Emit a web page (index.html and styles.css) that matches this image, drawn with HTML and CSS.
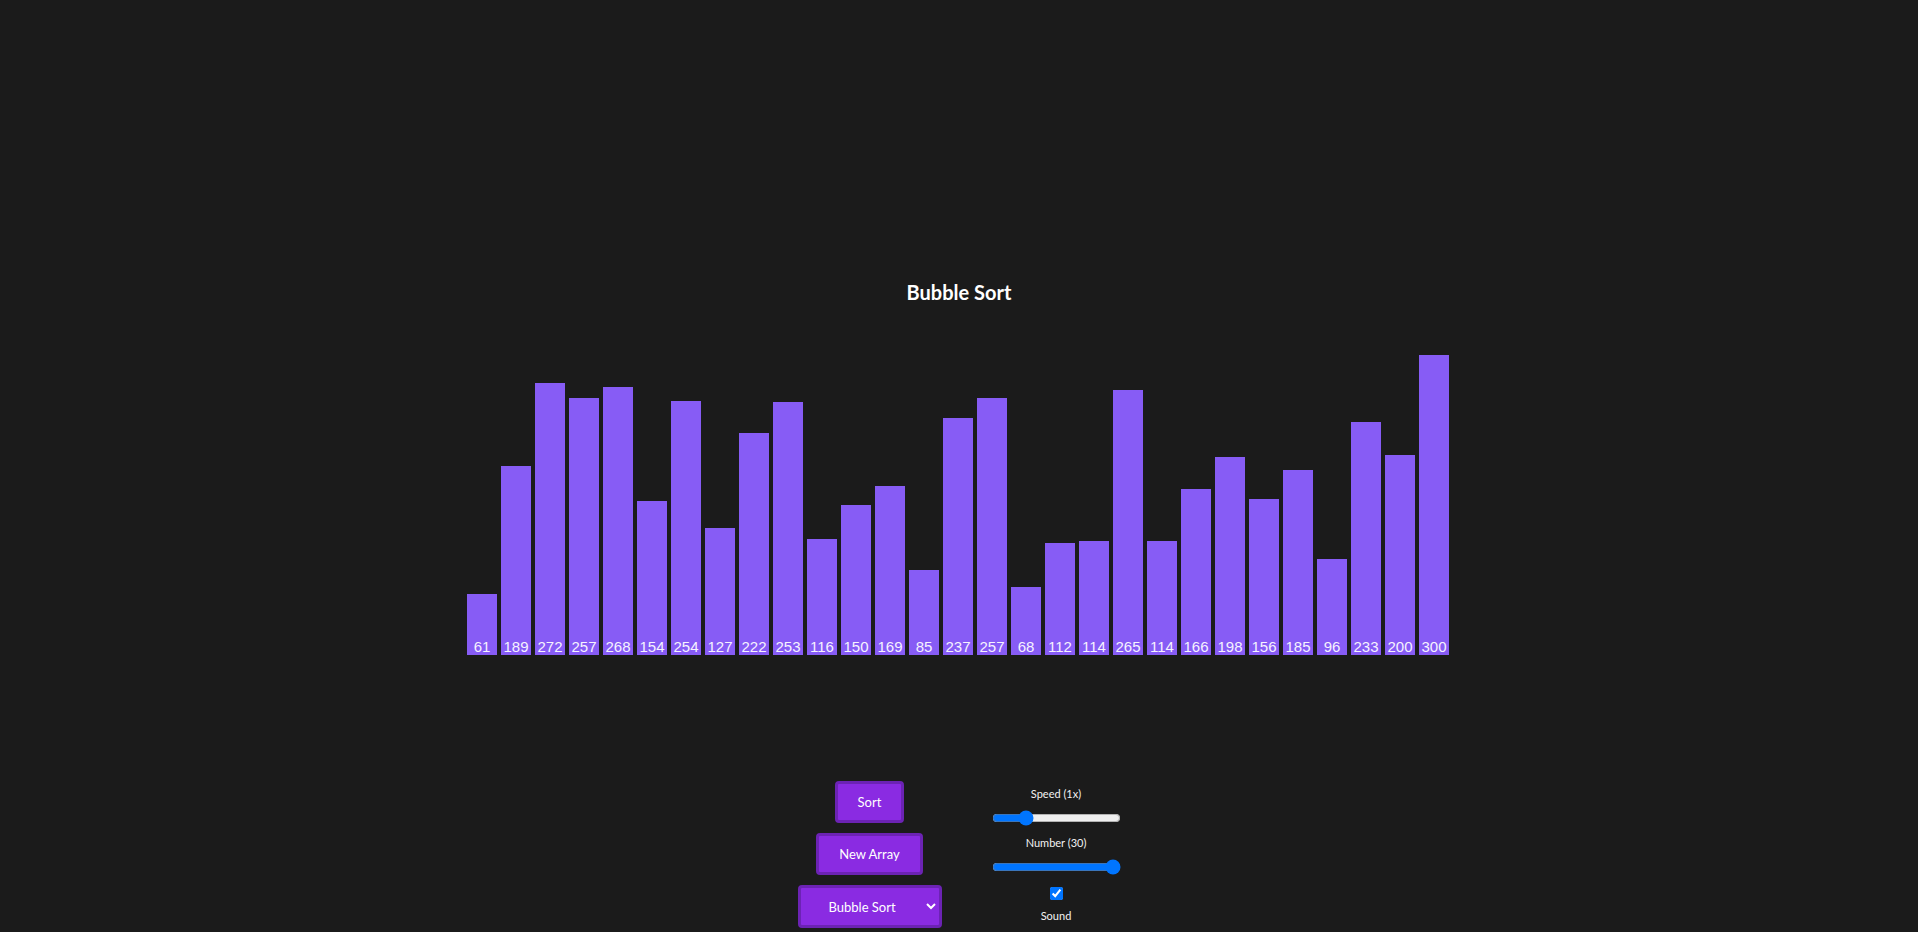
FILE: index.html
```html
<!DOCTYPE html>
<html lang="en">
<head>
<meta charset="utf-8">
<title>Sorting Visualizer</title>
<link rel="stylesheet" href="styles.css">
</head>
<body>
<main class="app">
  <h1 class="title">Bubble Sort</h1>
  <div class="bars">
    <div class="bar" style="height:61px"><span class="bar-label">61</span></div>
    <div class="bar" style="height:189px"><span class="bar-label">189</span></div>
    <div class="bar" style="height:272px"><span class="bar-label">272</span></div>
    <div class="bar" style="height:257px"><span class="bar-label">257</span></div>
    <div class="bar" style="height:268px"><span class="bar-label">268</span></div>
    <div class="bar" style="height:154px"><span class="bar-label">154</span></div>
    <div class="bar" style="height:254px"><span class="bar-label">254</span></div>
    <div class="bar" style="height:127px"><span class="bar-label">127</span></div>
    <div class="bar" style="height:222px"><span class="bar-label">222</span></div>
    <div class="bar" style="height:253px"><span class="bar-label">253</span></div>
    <div class="bar" style="height:116px"><span class="bar-label">116</span></div>
    <div class="bar" style="height:150px"><span class="bar-label">150</span></div>
    <div class="bar" style="height:169px"><span class="bar-label">169</span></div>
    <div class="bar" style="height:85px"><span class="bar-label">85</span></div>
    <div class="bar" style="height:237px"><span class="bar-label">237</span></div>
    <div class="bar" style="height:257px"><span class="bar-label">257</span></div>
    <div class="bar" style="height:68px"><span class="bar-label">68</span></div>
    <div class="bar" style="height:112px"><span class="bar-label">112</span></div>
    <div class="bar" style="height:114px"><span class="bar-label">114</span></div>
    <div class="bar" style="height:265px"><span class="bar-label">265</span></div>
    <div class="bar" style="height:114px"><span class="bar-label">114</span></div>
    <div class="bar" style="height:166px"><span class="bar-label">166</span></div>
    <div class="bar" style="height:198px"><span class="bar-label">198</span></div>
    <div class="bar" style="height:156px"><span class="bar-label">156</span></div>
    <div class="bar" style="height:185px"><span class="bar-label">185</span></div>
    <div class="bar" style="height:96px"><span class="bar-label">96</span></div>
    <div class="bar" style="height:233px"><span class="bar-label">233</span></div>
    <div class="bar" style="height:200px"><span class="bar-label">200</span></div>
    <div class="bar" style="height:300px"><span class="bar-label">300</span></div>
  </div>
  <div class="controls">
    <div class="buttons">
      <button class="btn">Sort</button>
      <button class="btn">New Array</button>
      <select class="algo">
        <option>Bubble Sort</option>
        <option>Selection Sort</option>
        <option>Insertion Sort</option>
        <option>Merge Sort</option>
        <option>Quick Sort</option>
      </select>
    </div>
    <div class="settings">
      <label class="setting-label">Speed (1x)</label>
      <input class="range" type="range" min="0.1" max="4" step="0.1" value="1">
      <label class="setting-label">Number (30)</label>
      <input class="range" type="range" min="5" max="30" value="30">
      <input class="check" type="checkbox" checked>
      <label class="setting-label">Sound</label>
    </div>
  </div>
</main>
</body>
</html>
```

FILE: styles.css
```css
html, body {
  margin: 0;
  padding: 0;
  background: #1b1b1b;
  color: #f2f2f2;
  font-family: Lato, "Open Sans", sans-serif;
}

.app {
  display: flex;
  flex-direction: column;
  align-items: center;
  padding-top: 280px;
}

.title {
  margin: 0;
  font-size: 20px;
  line-height: 24px;
  font-weight: 700;
  color: #ffffff;
}

.bars {
  display: flex;
  align-items: flex-end;
  height: 300px;
  margin: 51px 2px 0 0;
}

.bar {
  width: 30px;
  margin: 0 2px;
  background: #875cf5;
  display: flex;
  flex-direction: column;
  justify-content: flex-end;
  align-items: center;
}

.bar-label {
  font-family: "Liberation Sans", Arial, sans-serif;
  font-size: 15px;
  line-height: 16px;
  color: #f6f2ff;
}

.controls {
  display: flex;
  align-items: flex-start;
  gap: 50px;
  margin-top: 126px;
}

.buttons {
  display: flex;
  flex-direction: column;
  align-items: center;
  gap: 10px;
  width: 144px;
}

.btn, .algo {
  font-family: Lato, "Open Sans", sans-serif;
  font-size: 13px;
  line-height: 16px;
  color: #ffffff;
  background: #8a2be2;
  border: 3px solid #6c23b4;
  border-radius: 4px;
  padding: 10px 20px;
  cursor: pointer;
}

.algo {
  width: 144px;
  height: 43px;
  padding: 0 8px 0 24px;
}

.settings {
  display: flex;
  flex-direction: column;
  align-items: center;
  width: 129px;
  padding-top: 6px;
}

.setting-label {
  font-size: 11px;
  line-height: 14px;
  color: #f2f2f2;
}

.range {
  width: 129px;
  margin: 9px 0 10px;
}

.check {
  margin: 2px 0 9px;
  width: 13px;
  height: 13px;
}
```
